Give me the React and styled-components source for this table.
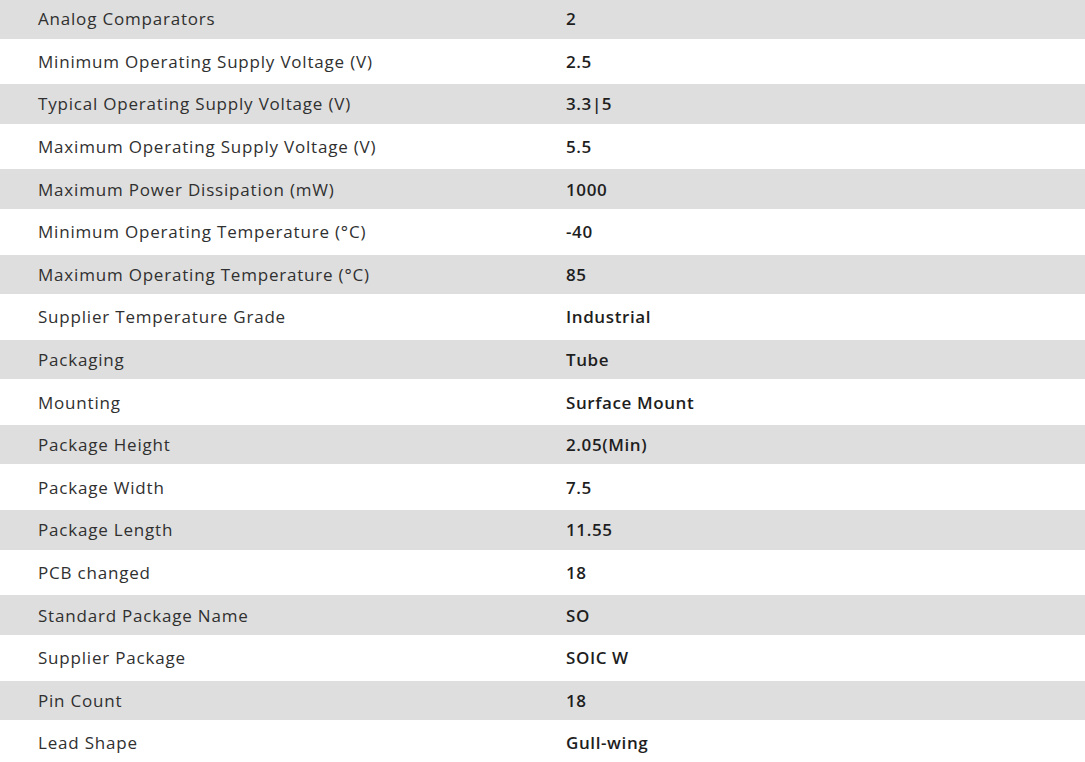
import React from "react";
import styled, { createGlobalStyle } from "styled-components";

const Global = createGlobalStyle`
  html, body { margin: 0; padding: 0; background: #ffffff; }
  body { font-family: "Open Sans", "Noto Sans", sans-serif; }
`;

const Table = styled.div`
  display: flex;
  flex-direction: column;
  width: 1085px;
  margin-top: -1px;
`;

const Row = styled.div`
  display: grid;
  grid-template-columns: 566px 1fr;
  align-items: center;
  height: ${(p) => (p.$shaded ? "39.5px" : "45.7px")};
  background: ${(p) => (p.$shaded ? "#dedede" : "#ffffff")};
`;

const Label = styled.div`
  padding-left: 38px;
  font-size: 17px;
  font-weight: 400;
  letter-spacing: 0.8px;
  color: #303030;
  white-space: nowrap;
`;

const Value = styled.div`
  font-size: 17px;
  font-weight: 600;
  letter-spacing: 0.6px;
  color: #1e1e1e;
  white-space: nowrap;
`;

const rows = [
  ["Analog Comparators", "2"],
  ["Minimum Operating Supply Voltage (V)", "2.5"],
  ["Typical Operating Supply Voltage (V)", "3.3|5"],
  ["Maximum Operating Supply Voltage (V)", "5.5"],
  ["Maximum Power Dissipation (mW)", "1000"],
  ["Minimum Operating Temperature (°C)", "-40"],
  ["Maximum Operating Temperature (°C)", "85"],
  ["Supplier Temperature Grade", "Industrial"],
  ["Packaging", "Tube"],
  ["Mounting", "Surface Mount"],
  ["Package Height", "2.05(Min)"],
  ["Package Width", "7.5"],
  ["Package Length", "11.55"],
  ["PCB changed", "18"],
  ["Standard Package Name", "SO"],
  ["Supplier Package", "SOIC W"],
  ["Pin Count", "18"],
  ["Lead Shape", "Gull-wing"],
];

export default function App() {
  return (
    <>
      <Global />
      <Table>
        {rows.map(([k, v], i) => (
          <Row key={k} $shaded={i % 2 === 0}>
            <Label>{k}</Label>
            <Value>{v}</Value>
          </Row>
        ))}
      </Table>
    </>
  );
}
